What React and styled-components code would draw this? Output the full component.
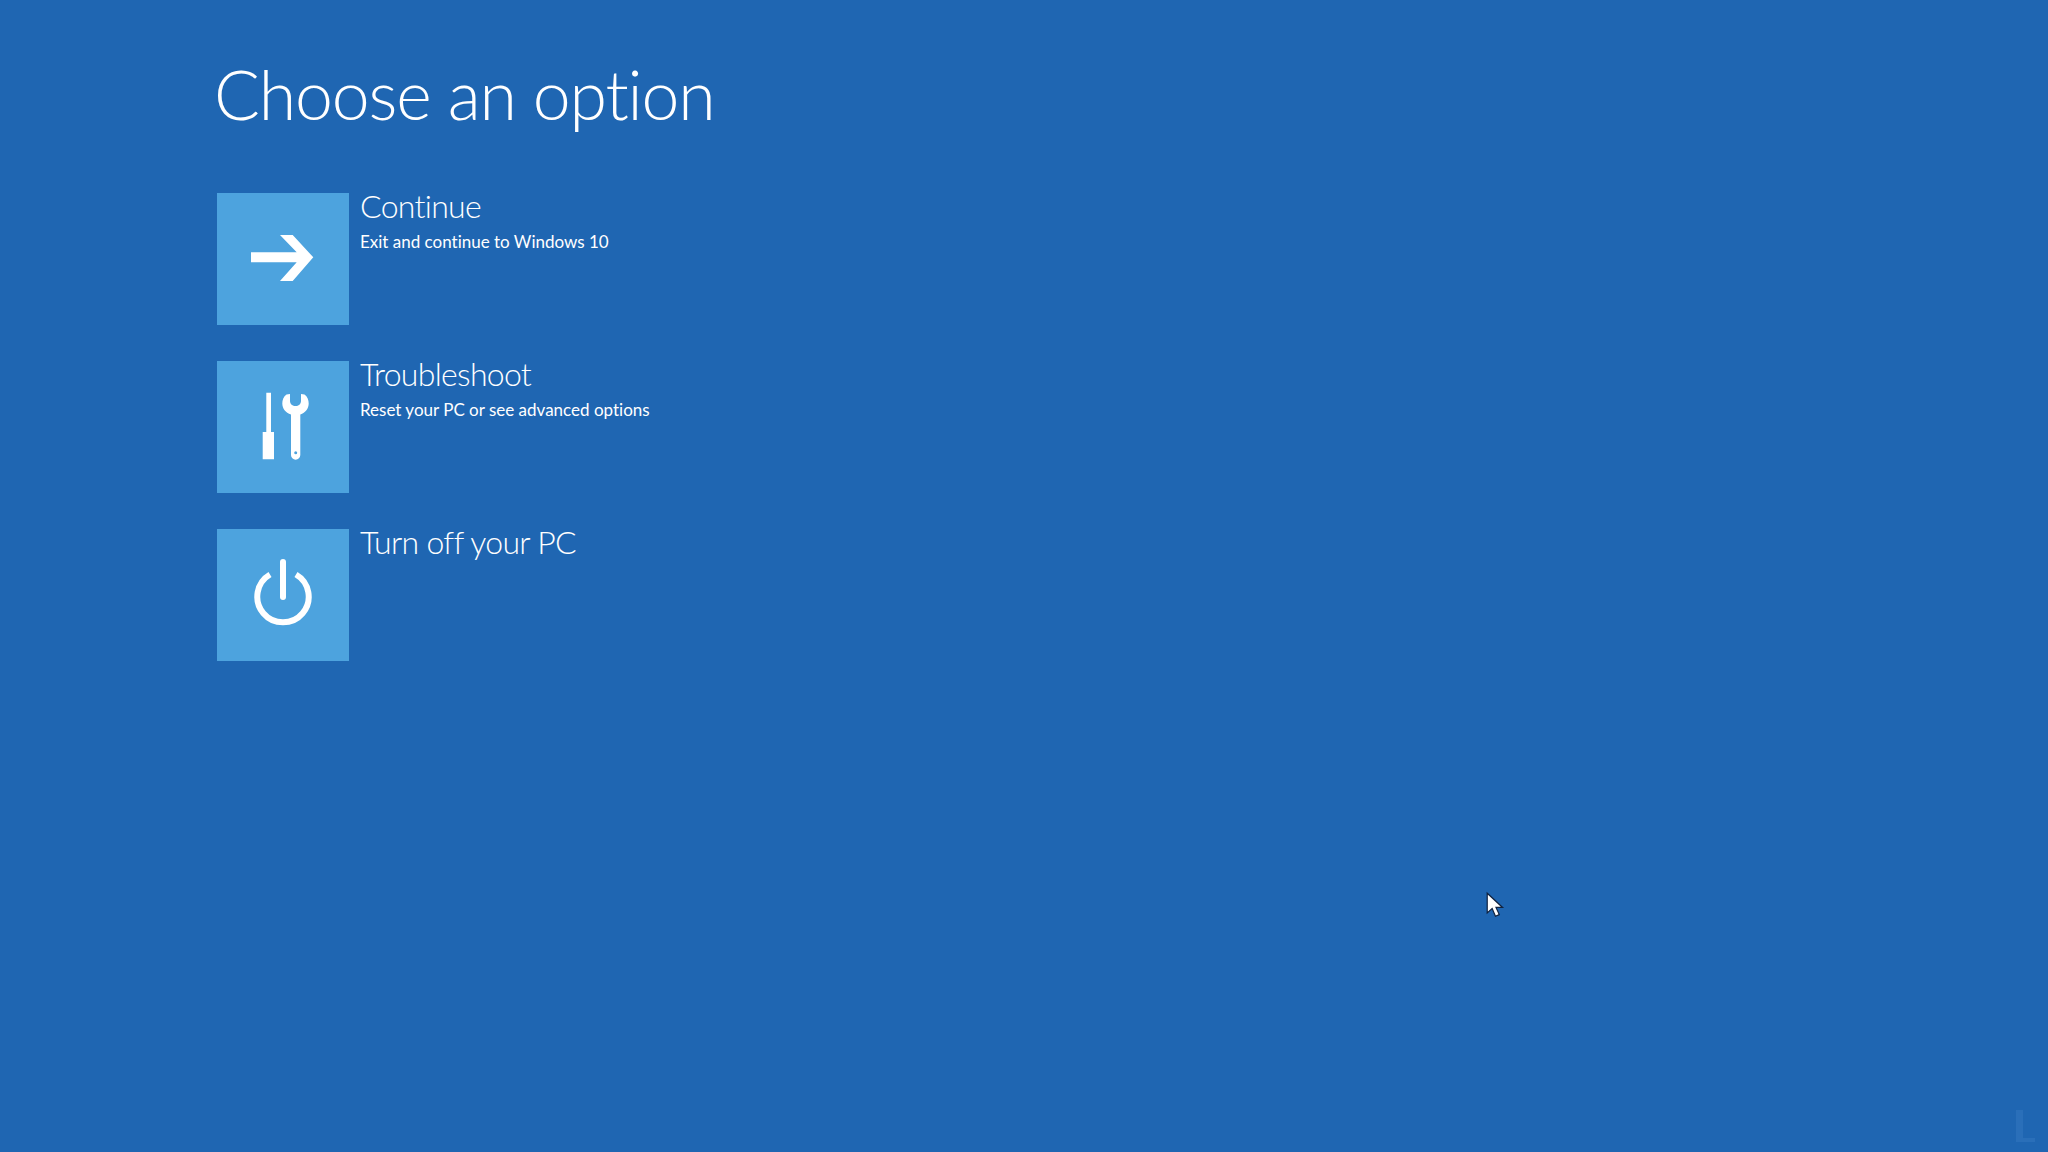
import React from 'react'
import styled, { createGlobalStyle } from 'styled-components'

const Global = createGlobalStyle`
  html, body {
    margin: 0;
    padding: 0;
    background: #1f66b2;
  }
`

const Screen = styled.div`
  position: relative;
  width: 2048px;
  height: 1152px;
  overflow: hidden;
  background: #1f66b2;
  color: #fff;
  font-family: "Lato", "Open Sans", sans-serif;
  font-variant-ligatures: none;
  padding: 48px 0 0 214px;
  box-sizing: border-box;
`

const Title = styled.h1`
  margin: 0 0 53px;
  font-size: 68px;
  line-height: 92px;
  font-weight: 300;
  letter-spacing: -1.2px;
`

const List = styled.div`
  display: flex;
  flex-direction: column;
  gap: 36px;
  margin-left: 3px;
`

const Row = styled.div`
  display: flex;
  gap: 11px;
`

const Tile = styled.div`
  width: 132px;
  height: 132px;
  background: #4da3de;
  svg {
    display: block;
  }
`

const Label = styled.div`
  display: flex;
  flex-direction: column;
  margin-top: -1px;
`

const Name = styled.div`
  font-size: 32px;
  line-height: 28px;
  font-weight: 300;
  letter-spacing: -0.7px;
`

const Hint = styled.div`
  font-size: 17px;
  line-height: 24px;
  margin-top: 10px;
  font-weight: 400;
`

const Cursor = styled.svg`
  position: absolute;
  left: 1485px;
  top: 891px;
`

const Mark = styled.svg`
  position: absolute;
  right: 0;
  bottom: 0;
`

const ArrowIcon = () => (
  <svg width="132" height="132" viewBox="0 0 132 132">
    <path fill="#fff" d="M63 42H75.7L96.3 64.3 75.7 88H63L79.7 69.3H34V59.3H79.7Z" />
  </svg>
)

const ToolsIcon = () => (
  <svg width="132" height="132" viewBox="0 0 132 132">
    <path fill="#fff" d="M49.3 31.7H54V71H57V98.3H45.7V71H49.3Z" />
    <path
      fill="#fff"
      fillRule="evenodd"
      d="M69.5 33.5C66.5 35.5 65.3 39 65.3 42.5 65.3 47.5 68.5 51.5 74 53.5V94A4.65 4.65 0 0 0 83.3 94V53.5C88.5 51.5 91.7 47.5 91.7 42.5 91.7 39 90.5 35.5 87.5 33.5L84 33V40C84 43 81.5 45 78.7 45 75.5 45 73 43 73 40V33ZM78.7 90.2A1.5 1.5 0 1 0 78.7 93.2 1.5 1.5 0 1 0 78.7 90.2Z"
    />
  </svg>
)

const PowerIcon = () => (
  <svg width="132" height="132" viewBox="0 0 132 132" fill="none" stroke="#fff" strokeWidth="6">
    <path d="M53 45.5A25.7 25.7 0 1 0 79 45.5" />
    <path strokeLinecap="round" d="M66 33V68" />
  </svg>
)

const options = [
  { name: 'Continue', hint: 'Exit and continue to Windows 10', Icon: ArrowIcon },
  { name: 'Troubleshoot', hint: 'Reset your PC or see advanced options', Icon: ToolsIcon },
  { name: 'Turn off your PC', Icon: PowerIcon },
]

export default function App() {
  return (
    <Screen>
      <Global />
      <Title>Choose an option</Title>
      <List>
        {options.map(({ name, hint, Icon }) => (
          <Row key={name}>
            <Tile>
              <Icon />
            </Tile>
            <Label>
              <Name>{name}</Name>
              {hint && <Hint>{hint}</Hint>}
            </Label>
          </Row>
        ))}
      </List>
      <Cursor width="22" height="28" viewBox="0 0 20 25.5">
        <path fill="#fff" stroke="#10223f" strokeWidth="1.1" d="M2 2V20L6.5 16 9.5 23 13 21.5 10 15H16Z" />
      </Cursor>
      <Mark width="48" height="48" viewBox="0 0 48 48">
        <path fill="#2a6fb9" d="M16 6H23V34H35V38H16Z" />
      </Mark>
    </Screen>
  )
}
